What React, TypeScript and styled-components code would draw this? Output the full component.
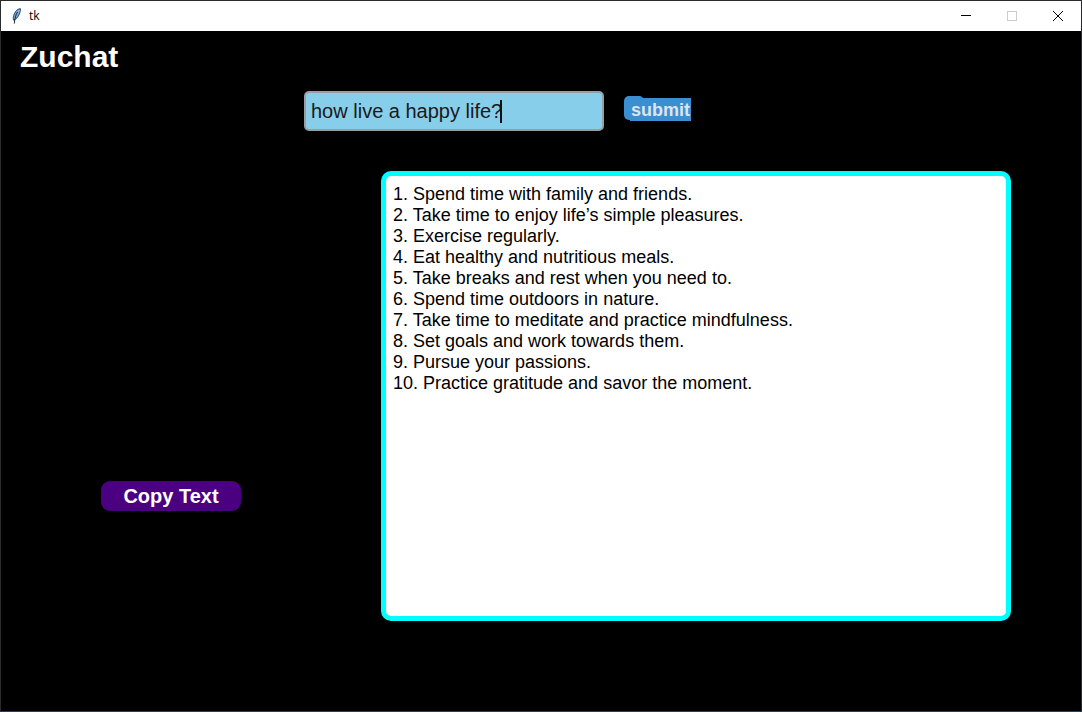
import React, { useState } from "react";
import styled, { createGlobalStyle } from "styled-components";

const GlobalStyle = createGlobalStyle`
  *, *::before, *::after { box-sizing: border-box; }
  body { margin: 0; background: #000; font-family: "Liberation Sans", Arial, sans-serif; }
`;

const AppWindow = styled.div`
  display: flex;
  flex-direction: column;
  min-height: 100vh;
  background: #000;
  border: 1px solid #2b2b2d;
  border-bottom-color: #1b4560;
`;

const TitleBar = styled.header`
  display: flex;
  align-items: center;
  height: 30px;
  padding-left: 8px;
  background: #fff;
  color: #000;
`;

const WindowTitle = styled.span`
  flex: 1;
  margin-left: 4px;
  font: 12px/16px "Open Sans", "Noto Sans", sans-serif;
`;

const CaptionButton = styled.button`
  display: grid;
  place-items: center;
  width: 46px;
  height: 30px;
  padding: 0;
  border: 0;
  background: transparent;
  color: #000;

  &:disabled { color: #ccc; }
`;

const Content = styled.main`
  flex: 1;
  display: flex;
  flex-direction: column;
  padding: 8px 70px 90px 0;
`;

const Heading = styled.h1`
  margin: 0 0 16px 19px;
  font-size: 30px;
  line-height: 36px;
  font-weight: bold;
  color: #fff;
`;

const AskForm = styled.form`
  display: flex;
  align-items: flex-start;
  gap: 20px;
  margin-left: 303px;
`;

const Field = styled.label`
  display: flex;
  align-items: center;
  width: 300px;
  height: 40px;
  padding: 0 5px;
  border: 2px solid #979da2;
  border-radius: 5px;
  background: #87ceeb;
  cursor: text;
`;

const QuestionInput = styled.input`
  field-sizing: content;
  max-width: 100%;
  height: 24px;
  padding: 0;
  border: 0;
  outline: 0;
  background: transparent;
  font: 20px/24px "Liberation Sans", Arial, sans-serif;
  color: #1a1a1a;
  caret-color: transparent;
`;

const Caret = styled.span`
  width: 2px;
  height: 23px;
  margin-left: -2px;
  background: #111;
`;

const SubmitButton = styled.button`
  position: relative;
  margin-top: 5px;
  padding: 2px 0 0 6px;
  border: 0;
  background: transparent;

  &::before {
    content: "";
    position: absolute;
    top: 0;
    left: 0;
    width: 20px;
    height: 24px;
    border-radius: 5px;
    background: #3b8ed0;
  }
`;

const SubmitLabel = styled.span`
  position: relative;
  display: block;
  height: 23px;
  padding: 0 1px;
  background: #3b8ed0;
  font: bold 18px/24px "Liberation Sans", Arial, sans-serif;
  color: #dce4ee;
`;

const AnswerRow = styled.section`
  flex: 1;
  display: grid;
  grid-template-columns: 380px 1fr;
  margin-top: 40px;
`;

const Actions = styled.div`
  padding: 310px 0 0 100px;
`;

const CopyButton = styled.button`
  display: block;
  width: 140px;
  height: 30px;
  padding: 0;
  border: 0;
  border-radius: 9px;
  background: #4b0082;
  font: bold 20px/30px "Liberation Sans", Arial, sans-serif;
  color: #fff;
`;

const Answer = styled.textarea`
  display: block;
  width: 100%;
  min-height: 450px;
  padding: 8px 7px;
  border: 5px solid #0ff;
  border-radius: 10px;
  outline: 0;
  resize: none;
  background: #fff;
  font: 18px/21px "Liberation Sans", Arial, sans-serif;
  color: #000;
`;

const Feather = () => (
  <svg width="16" height="18" viewBox="0 0 16 18" aria-hidden="true">
    <path d="M11.4 1.6 C8.8 1.8 6.4 4 5.2 7 C4.2 9.4 4 11.4 4.6 13.2 C7.2 12.4 9.2 9.8 10.4 7 C11.2 5 11.6 3.2 11.4 1.6Z" fill="#6fa3e0" stroke="#1d2a40" strokeWidth="0.8" />
    <path d="M10.4 3.2 C8.4 6 6.6 9.4 5.9 12" stroke="#a9cbf2" strokeWidth="0.8" fill="none" />
    <path d="M8.6 5 C6.8 8 5.8 11 5.3 16.6" stroke="#111" strokeWidth="0.9" fill="none" />
  </svg>
);

const reply = [
  "1. Spend time with family and friends.",
  "2. Take time to enjoy life’s simple pleasures.",
  "3. Exercise regularly.",
  "4. Eat healthy and nutritious meals.",
  "5. Take breaks and rest when you need to.",
  "6. Spend time outdoors in nature.",
  "7. Take time to meditate and practice mindfulness.",
  "8. Set goals and work towards them.",
  "9. Pursue your passions.",
  "10. Practice gratitude and savor the moment.",
].join("\n");

export default function App() {
  const [question, setQuestion] = useState("how live a happy life?");
  const [answer, setAnswer] = useState(reply);

  return (
    <>
      <GlobalStyle />
      <AppWindow>
        <TitleBar>
          <Feather />
          <WindowTitle>tk</WindowTitle>
          <CaptionButton type="button" aria-label="Minimize">
            <svg width="10" height="10" viewBox="0 0 10 10" shapeRendering="crispEdges">
              <path d="M0 4.5H10" stroke="currentColor" />
            </svg>
          </CaptionButton>
          <CaptionButton type="button" aria-label="Maximize" disabled>
            <svg width="10" height="10" viewBox="0 0 10 10" shapeRendering="crispEdges">
              <rect x="0.5" y="0.5" width="9" height="9" fill="none" stroke="currentColor" />
            </svg>
          </CaptionButton>
          <CaptionButton type="button" aria-label="Close">
            <svg width="10" height="10" viewBox="0 0 10 10">
              <path d="M0 0L10 10M10 0L0 10" stroke="currentColor" strokeWidth="1" />
            </svg>
          </CaptionButton>
        </TitleBar>
        <Content>
          <Heading>Zuchat</Heading>
          <AskForm onSubmit={(e) => e.preventDefault()}>
            <Field>
              <QuestionInput
                aria-label="Question"
                value={question}
                onChange={(e) => setQuestion(e.target.value)}
              />
              <Caret />
            </Field>
            <SubmitButton type="submit">
              <SubmitLabel>submit</SubmitLabel>
            </SubmitButton>
          </AskForm>
          <AnswerRow>
            <Actions>
              <CopyButton type="button" onClick={() => navigator.clipboard?.writeText(answer)}>
                Copy Text
              </CopyButton>
            </Actions>
            <Answer
              aria-label="Answer"
              spellCheck={false}
              value={answer}
              onChange={(e) => setAnswer(e.target.value)}
            />
          </AnswerRow>
        </Content>
      </AppWindow>
    </>
  );
}
